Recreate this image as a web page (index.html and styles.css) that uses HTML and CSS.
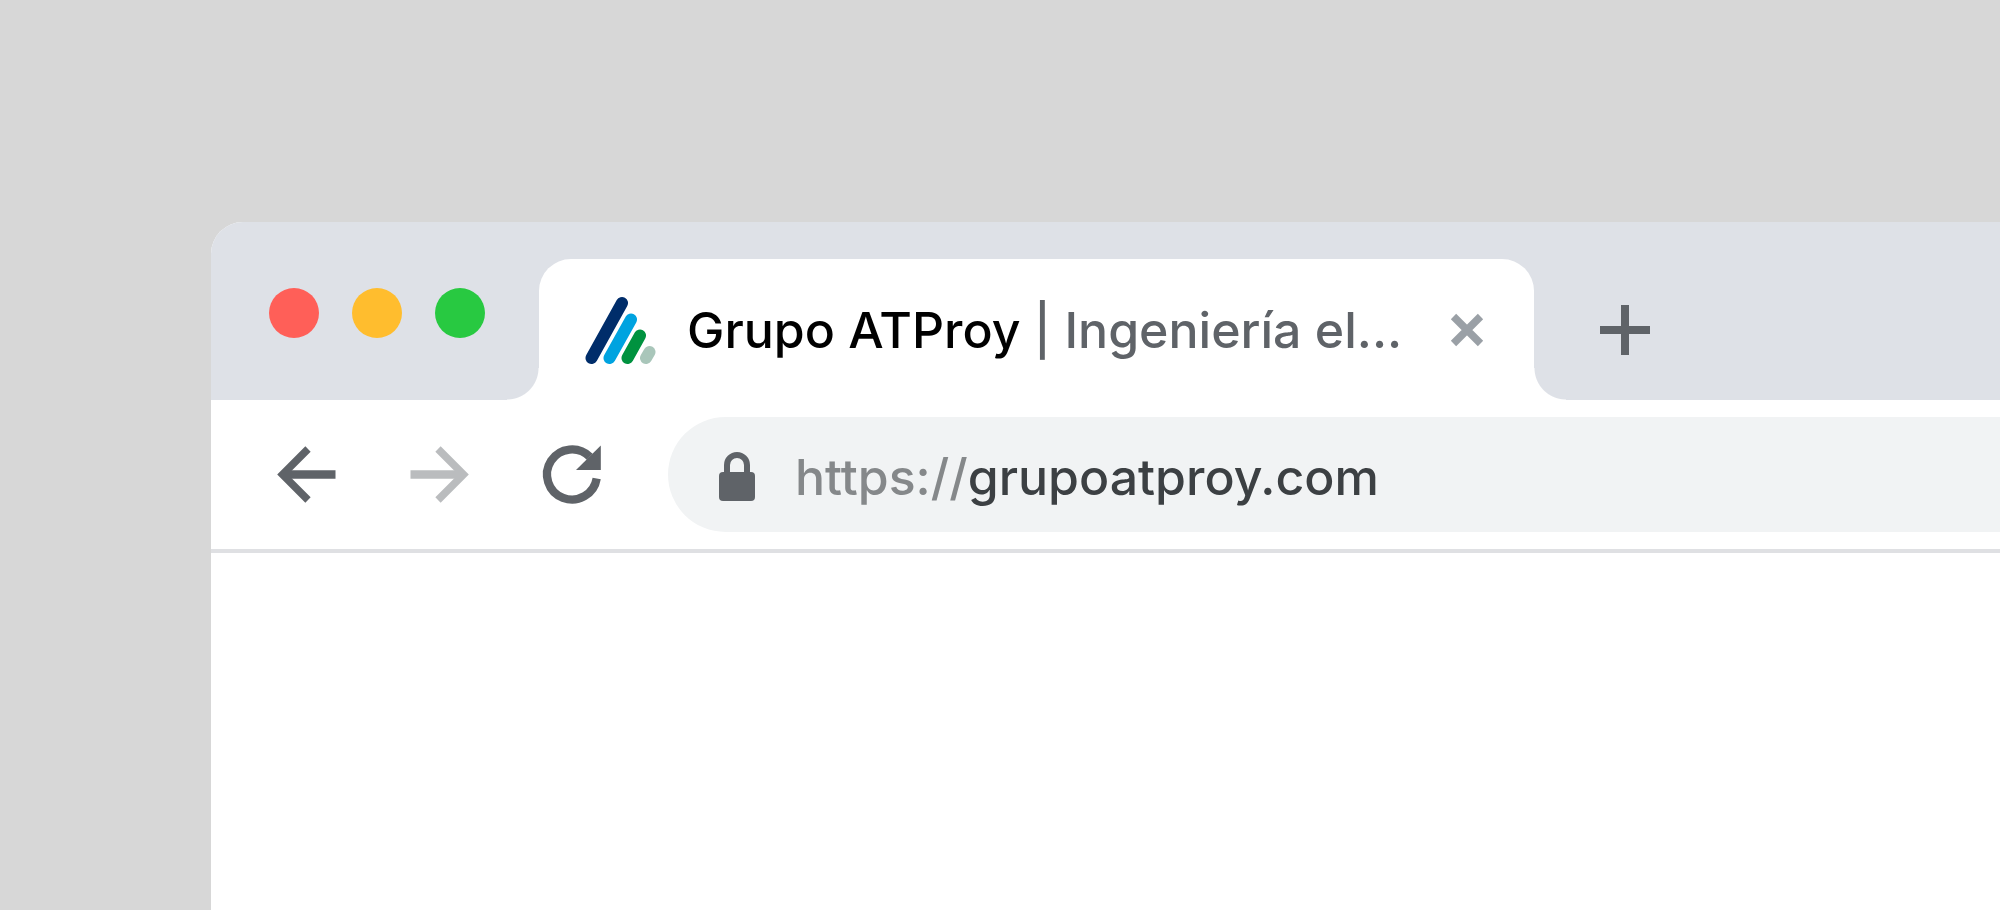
FILE: index.html
```html
<!DOCTYPE html>
<html lang="es">
<head>
<meta charset="utf-8">
<meta name="viewport" content="width=device-width, initial-scale=1">
<title>Grupo ATProy | Ingeniería eléctrica</title>
<link rel="stylesheet" href="styles.css">
</head>
<body>
<main class="browser">
  <header class="tab-strip">
    <div class="window-controls">
      <button class="dot dot-close" aria-label="Cerrar ventana"></button>
      <button class="dot dot-minimize" aria-label="Minimizar"></button>
      <button class="dot dot-zoom" aria-label="Maximizar"></button>
    </div>
    <div class="tab">
      <svg class="logo" viewBox="0 0 72 72" aria-hidden="true" fill="none" stroke-width="12" stroke-linecap="round">
        <path stroke="#002d6a" d="M6.500 64L37 9"/>
        <path stroke="#00a3e0" d="M24.500 64L46 25.500"/>
        <path stroke="#00923f" d="M42.500 64L55 41.500"/>
        <path stroke="#a9c6ba" d="M61 64L64.500 58"/>
      </svg>
      <p class="tab-title"><span class="site">Grupo ATProy</span> | Ingeniería el...</p>
      <button class="icon-button" aria-label="Cerrar pestaña">
        <svg class="close-icon" viewBox="0 0 34 34" fill="none" stroke="#9aa0a6" stroke-width="7.500"><path d="M3.500 3.500L30.500 30.500M30.500 3.500L3.500 30.500"/></svg>
      </button>
    </div>
    <button class="icon-button new-tab" aria-label="Nueva pestaña">
      <svg class="plus-icon" viewBox="0 0 50 50" fill="#5f6368"><path d="M21 0h8v21h21v8H29v21h-8V29H0v-8h21z"/></svg>
    </button>
  </header>
  <nav class="toolbar">
    <div class="nav-buttons">
      <button class="icon-button" aria-label="Atrás">
        <svg class="nav-icon" viewBox="0 0 87 87" fill="none" stroke="#5f6368"><path stroke-width="7.500" d="M45 18L19.500 43.500L45 69"/><path stroke-width="8.500" d="M22 43.500H72.500"/></svg>
      </button>
      <button class="icon-button" aria-label="Adelante">
        <svg class="nav-icon" viewBox="0 0 87 87" fill="none" stroke="#babcbe"><path stroke-width="7.500" d="M42 18L67.500 43.500L42 69"/><path stroke-width="8.500" d="M65 43.500H14.500"/></svg>
      </button>
      <button class="icon-button" aria-label="Recargar">
        <svg class="nav-icon" viewBox="0 0 87 87"><path d="M67.700 47.500A25 25 0 1 1 60.700 25.800" fill="none" stroke="#5f6368" stroke-width="8.300"/><path d="M71.800 14.500V39H47z" fill="#5f6368"/></svg>
      </button>
    </div>
    <div class="address-bar">
      <svg class="lock-icon" viewBox="0 0 36 49" aria-hidden="true">
        <rect y="20" width="36" height="29" rx="4" fill="#5f6368"/>
        <path d="M8 21V13a10 10 0 0 1 20 0v8" fill="none" stroke="#5f6368" stroke-width="6"/>
      </svg>
      <label class="scheme" for="address">https://</label>
      <input class="address" id="address" type="text" value="grupoatproy.com" spellcheck="false">
    </div>
  </nav>
</main>
</body>
</html>
```
FILE: styles.css
```css
* {
  box-sizing: border-box;
}

body {
  margin: 0;
  min-height: 100vh;
  display: flex;
  padding: 222px 0 0 211px;
  background: #d7d7d7;
  font-family: Inter, "Liberation Sans", sans-serif;
  font-size: 50px;
  font-weight: 500;
}

button {
  border: 0;
  padding: 0;
  background: none;
}

svg {
  display: block;
  flex: none;
}

.browser {
  flex: 1;
  min-width: 0;
  background: #fff;
  border-top-left-radius: 32px;
  overflow: hidden;
}

.tab-strip {
  display: flex;
  align-items: flex-end;
  padding: 37px 0 0 58px;
  background: #dee1e7;
}

.window-controls {
  display: flex;
  gap: 33px;
  align-self: flex-start;
  padding-top: 29px;
  margin-right: 54px;
}

.dot {
  width: 50px;
  height: 50px;
  border-radius: 50%;
}

.dot-close {
  background: #ff5f58;
}

.dot-minimize {
  background: #ffbd2e;
}

.dot-zoom {
  background: #28c941;
}

.tab {
  position: relative;
  display: flex;
  align-items: center;
  width: 995px;
  height: 141px;
  padding: 0 50px 0 46px;
  background: #fff;
  border-radius: 32px 32px 0 0;
}

.tab::before,
.tab::after {
  content: "";
  position: absolute;
  bottom: 0;
  width: 32px;
  height: 32px;
}

.tab::before {
  right: 100%;
  background: radial-gradient(circle at 0 0, transparent 31px, #fff 32px);
}

.tab::after {
  left: 100%;
  background: radial-gradient(circle at 100% 0, transparent 31px, #fff 32px);
}

.logo {
  width: 72px;
  height: 72px;
}

.tab-title {
  flex: 1;
  margin: 0 0 0 30px;
  color: #5f6368;
  line-height: 64px;
  white-space: nowrap;
}

.site {
  color: #000;
}

.close-icon {
  width: 34px;
  height: 34px;
}

.new-tab {
  margin: 0 0 45px 66px;
}

.plus-icon {
  width: 50px;
  height: 50px;
}

.toolbar {
  display: flex;
  align-items: center;
  padding: 17px 0 17px 52px;
  border-bottom: 4px solid #dfe0e3;
}

.nav-buttons {
  display: flex;
  gap: 46px;
  margin-right: 52px;
}

.nav-icon {
  width: 87px;
  height: 87px;
}

.address-bar {
  flex: 1;
  min-width: 0;
  display: flex;
  align-items: center;
  height: 115px;
  padding: 4px 0 0 51px;
  background: #f1f3f4;
  border-radius: 58px 0 0 58px;
}

.lock-icon {
  width: 36px;
  height: 49px;
  margin-right: 40px;
}

.scheme {
  color: #85888a;
}

.address {
  flex: 1;
  min-width: 0;
  padding: 0;
  border: 0;
  outline: 0;
  background: none;
  color: #3c4043;
  font: inherit;
}
```
